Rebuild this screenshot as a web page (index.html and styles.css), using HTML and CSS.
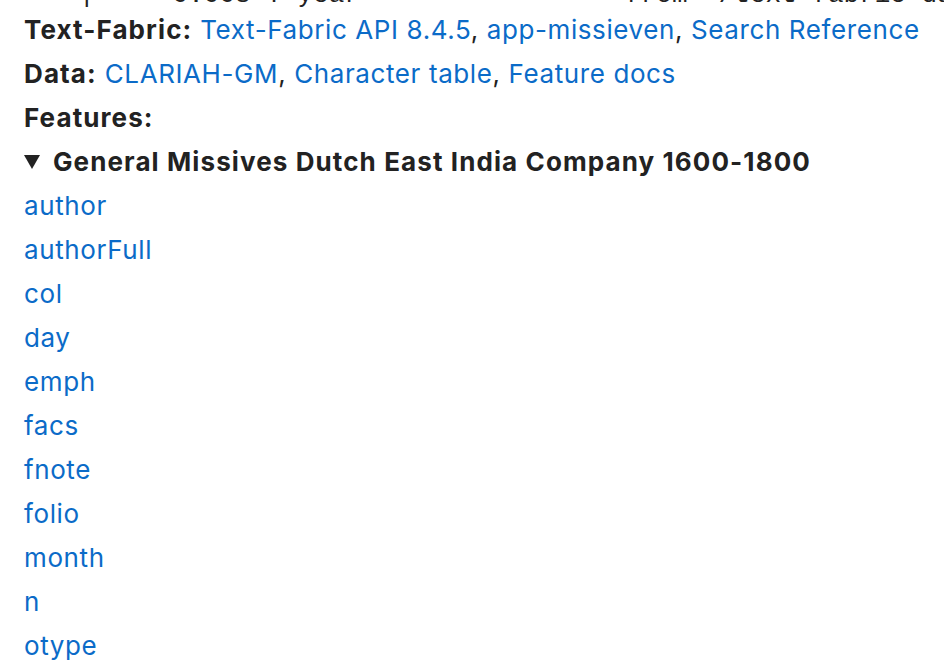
FILE: index.html
```html
<!DOCTYPE html>
<html>
<head>
<meta charset="utf-8">
<link rel="stylesheet" href="styles.css">
</head>
<body>
<div class="log"><span class="log-text">|     0.00s T year                 from ~/text-fabric-data</span></div>
<div class="content">
  <div class="row"><b>Text-Fabric:</b> <a href="#">Text-Fabric API 8.4.5</a>, <a href="#">app-missieven</a>, <a href="#">Search Reference</a></div>
  <div class="row"><b>Data:</b> <a href="#">CLARIAH-GM</a>, <a href="#">Character table</a>, <a href="#">Feature docs</a></div>
  <div class="row"><b>Features:</b></div>
  <details open class="features">
    <summary class="row summary"><svg class="caret" width="16" height="14" viewBox="0 0 16 14"><polygon points="0,0 16,0 8,14" fill="#222"/></svg><b>General Missives Dutch East India Company 1600-1800</b></summary>
    <div class="row"><a href="#">author</a></div>
    <div class="row"><a href="#">authorFull</a></div>
    <div class="row"><a href="#">col</a></div>
    <div class="row"><a href="#">day</a></div>
    <div class="row"><a href="#">emph</a></div>
    <div class="row"><a href="#">facs</a></div>
    <div class="row"><a href="#">fnote</a></div>
    <div class="row"><a href="#">folio</a></div>
    <div class="row"><a href="#">month</a></div>
    <div class="row"><a href="#">n</a></div>
    <div class="row"><a href="#">otype</a></div>
  </details>
</div>
</body>
</html>
```
FILE: styles.css
```css
html, body {
  margin: 0;
  padding: 0;
  background: #fff;
  overflow: hidden;
}
body {
  width: 944px;
  height: 670px;
  font-family: Inter, "Noto Sans", sans-serif;
  color: #222;
}
.log {
  height: 8px;
  overflow: hidden;
  display: flex;
  align-items: flex-end;
  padding-left: 79px;
  font-family: "Liberation Mono", monospace;
  font-size: 26px;
  line-height: 26px;
  color: #222;
  white-space: pre;
}
.log-text {
  display: block;
}
.content {
  padding-left: 24px;
  font-size: 26px;
  line-height: 44px;
  letter-spacing: 0.6px;
}
.row {
  height: 44px;
  white-space: nowrap;
}
b {
  font-weight: 700;
  color: #222;
  letter-spacing: 1.1px;
}
a {
  color: #0b6bc8;
  text-decoration: none;
}
.summary {
  list-style: none;
  display: flex;
  align-items: center;
  gap: 13px;
  cursor: pointer;
}
.summary::-webkit-details-marker {
  display: none;
}
.caret {
  flex: none;
}
```
